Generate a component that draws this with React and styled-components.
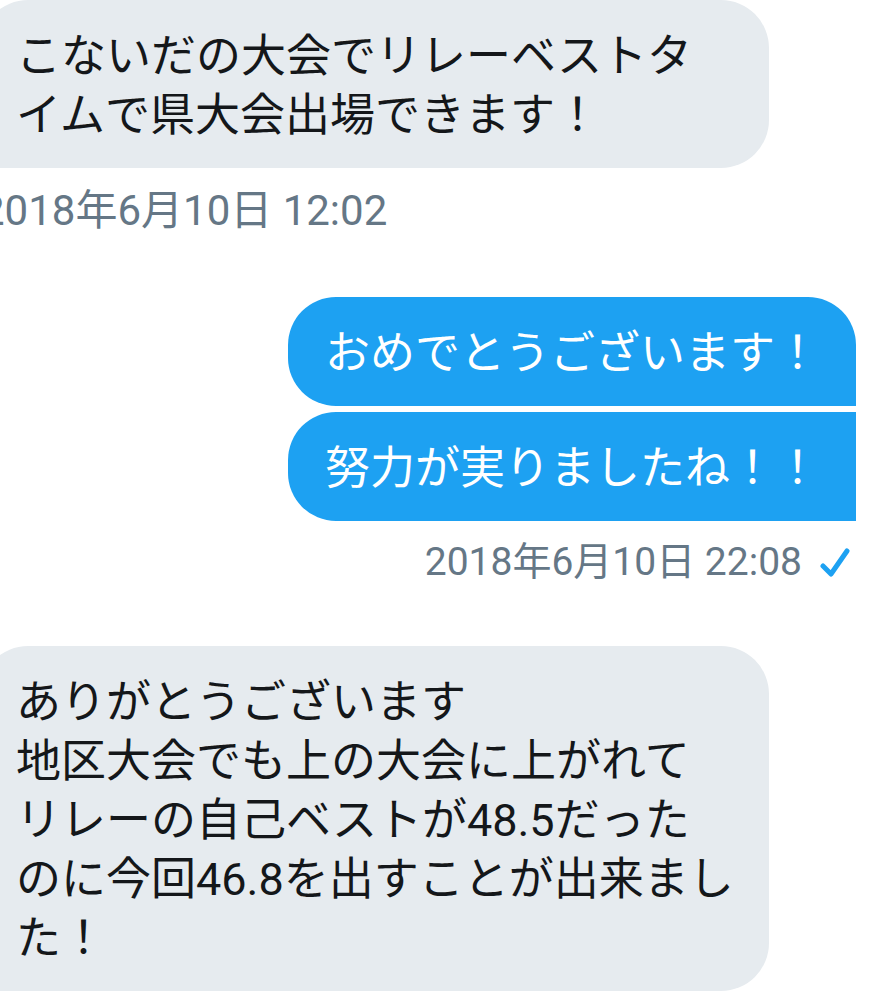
import * as React from 'react';
import styled, { createGlobalStyle } from 'styled-components';

const GlobalStyle = createGlobalStyle`
    body {
        margin: 0;
        background: #ffffff;
        overflow-x: hidden;
        font-family: Roboto, "Noto Sans CJK JP", sans-serif;
    }
`;

const Conversation = styled.main`
    display: flex;
    flex-direction: column;
    gap: 53px;
    overflow: hidden;
`;

const Group = styled.section`
    display: flex;
    flex-direction: column;
    align-items: ${props => props.$sent ? 'flex-end' : 'flex-start'};
    gap: 6px;
    margin-left: ${props => props.$sent ? '0' : '-20px'};
    margin-right: ${props => props.$sent ? '36px' : '123px'};
`;

const Bubble = styled.p`
    box-sizing: border-box;
    margin: 0;
    padding: ${props => props.$sent ? '27px 36px 23px 37px' : '27px 34px 23px 36px'};
    font-size: 45px;
    line-height: 59px;
    white-space: pre-line;
    color: ${props => props.$sent ? '#ffffff' : '#14171a'};
    background: ${props => props.$sent ? '#1da1f2' : '#e6ebef'};
    border-radius: ${props => props.$radius};
    width: ${props => props.$sent ? 'auto' : '100%'};
`;

const Stamp = styled.footer`
    display: flex;
    align-items: center;
    gap: 18px;
    padding: ${props => props.$sent ? '10px 6px 6px' : '10px 1px 6px'};
    font-size: ${props => props.$sent ? '39px' : '42px'};
    line-height: ${props => props.$sent ? '50px' : '54px'};
    white-space: nowrap;
    color: #657786;
`;

const Check = () => (
    <svg width="30" height="32" viewBox="0 0 30 32" fill="none" aria-label="送信済み">
        <path d="M3 20L11 28L27 5" stroke="#1da1f2" strokeWidth="5" strokeLinecap="round" strokeLinejoin="round" />
    </svg>
);

const groups = [
    {
        sent: false,
        time: '2018年6月10日 12:02',
        messages: ['こないだの大会でリレーベストタイムで県大会出場できます！']
    },
    {
        sent: true,
        time: '2018年6月10日 22:08',
        messages: ['おめでとうございます！', '努力が実りましたね！！']
    },
    {
        sent: false,
        messages: ['ありがとうございます\n地区大会でも上の大会に上がれて\nリレーの自己ベストが48.5だった\nのに今回46.8を出すことが出来ました！']
    }
];

// the corner next to the sender's side stays square
const getRadius = (sent, idx) => {
    if (!sent) return '48px 48px 48px 0';
    return idx === 0 ? '48px 48px 0 48px' : '48px 0 0 48px';
};

export default function App() {
    return <Conversation>
        <GlobalStyle/>
        {
            groups.map((group, idx) => (
                <Group key={idx} $sent={group.sent}>
                    {
                        group.messages.map((text, i) => (
                            <Bubble key={i} $sent={group.sent} $radius={getRadius(group.sent, i)}>{text}</Bubble>
                        ))
                    }
                    {group.time && <Stamp $sent={group.sent}><time>{group.time}</time>{group.sent && <Check/>}</Stamp>}
                </Group>
            ))
        }
    </Conversation>;
}
